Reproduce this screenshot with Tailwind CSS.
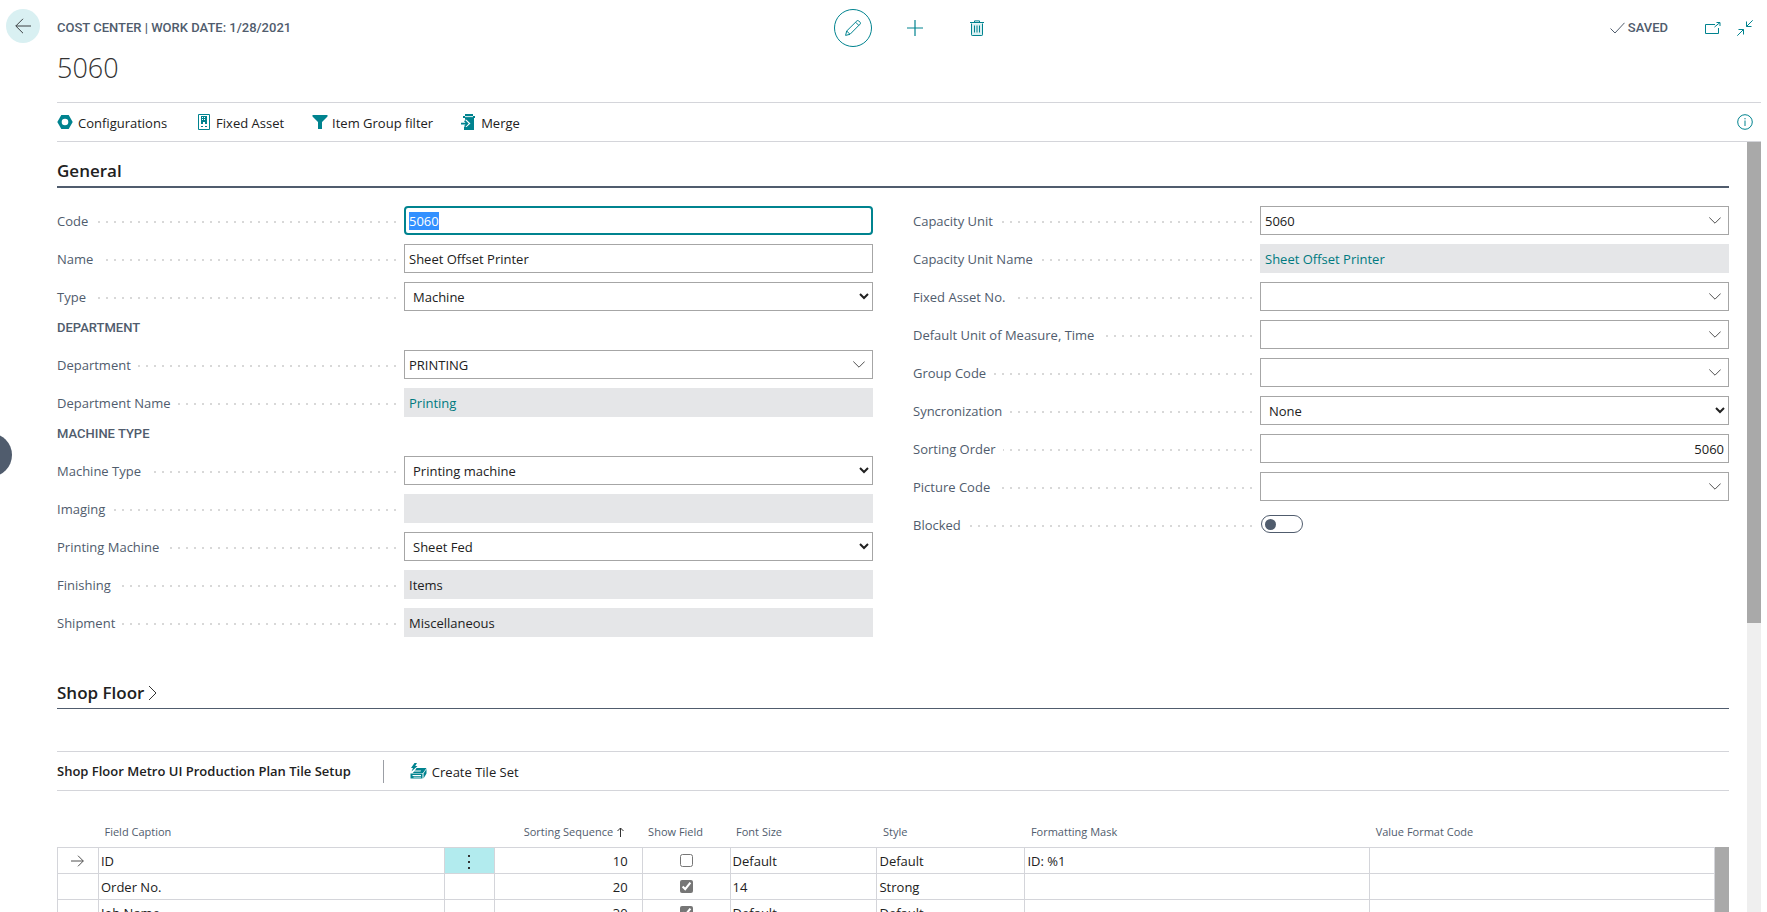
<!DOCTYPE html>
<html lang="en">
<head>
<meta charset="utf-8">
<meta name="viewport" content="width=device-width, initial-scale=1">
<title>Cost Center - 5060</title>
<script src="https://cdn.jsdelivr.net/npm/@tailwindcss/browser@4"></script>
</head>
<body class="relative flex h-screen flex-col overflow-hidden bg-white pr-1.5 font-['Open_Sans','Noto_Sans',sans-serif] text-[13px] leading-5 text-[#212121]">

<button aria-label="Open navigation" class="absolute -left-8 top-[433px] size-11 rounded-full bg-[#505c6d]"></button>

<header class="flex shrink-0">
  <div class="w-[57px] shrink-0 pl-1.5 pt-[9px]">
    <button aria-label="Back" class="flex size-[34px] items-center justify-center rounded-full bg-[#d9f0f2]">
      <svg class="size-4" viewBox="0 0 16 16" fill="none" stroke="#3c4043" stroke-width="1"><path d="M16 8H.8M8 .8.8 8 8 15.2"/></svg>
    </button>
  </div>
  <div class="flex-1 border-b border-[#d4d5da] pr-2 pt-[9px]">
    <div class="grid h-[38px] grid-cols-[minmax(0,777fr)_auto_minmax(0,757fr)] items-center">
      <p class="font-[Roboto,sans-serif] text-[13px] font-medium text-[#505c6d]">COST CENTER | WORK DATE: 1/28/2021</p>
      <div class="flex gap-6 text-[#00838f]">
        <button aria-label="Edit" class="flex size-[38px] items-center justify-center rounded-full border border-[#00838f]">
          <svg class="size-4" viewBox="0 0 16 16" fill="none" stroke="currentColor" stroke-width="1"><path d="M.6 15.400 1.700 11 11.900.9a1.300 1.300 0 0 1 1.800 0l1.400 1.400a1.300 1.300 0 0 1 0 1.800L5 14.300.6 15.400ZM1.700 11 5 14.300M10.600 2.200l3.200 3.200"/></svg>
        </button>
        <button aria-label="New" class="flex size-[38px] items-center justify-center">
          <svg class="size-4" viewBox="0 0 16 16" fill="none" stroke="currentColor" stroke-width="1.200"><path d="M8 0v16M0 8h16"/></svg>
        </button>
        <button aria-label="Delete" class="flex size-[38px] items-center justify-center">
          <svg class="size-4" viewBox="0 0 16 16" fill="none" stroke="currentColor" stroke-width="1"><path d="M2.500 3.500v11.300q0 .7.7.7h9.600q.7 0 .7-.7V3.500" fill="#d9f0f2"/><path d="M1 2.500h14M5.500 2.500v-1.600h5v1.600M5.500 5.500v7M8 5.500v7M10.500 5.500v7"/></svg>
        </button>
      </div>
      <div class="flex items-center justify-end">
        <svg class="mr-[3px] h-3 w-[15px]" viewBox="0 0 15 12" fill="none" stroke="#505c6d" stroke-width="1"><path d="M.5 6.500 5 11 14.500.8"/></svg>
        <span class="mr-[37px] font-[Roboto,sans-serif] text-[13px] font-medium text-[#505c6d]">SAVED</span>
        <button aria-label="Open in new window" class="mr-4 text-[#00838f]">
          <svg class="size-4" viewBox="0 0 16 16" fill="none" stroke="currentColor"><path d="M10 4.500H.5v9h13V8M9.500 7 15 2.500M11.500 2.500h3.500V6"/></svg>
        </button>
        <button aria-label="Collapse" class="text-[#00838f]">
          <svg class="size-4" viewBox="0 0 16 16" fill="none" stroke="currentColor"><path d="M15.700.3 9.500 6.500M9.500 1.500v5h5M.3 15.700 6.500 9.500M1.500 9.500h5v5"/></svg>
        </button>
      </div>
    </div>
    <h1 class="mt-[3px] mb-4 text-[27px] font-light leading-9 text-[#333]">5060</h1>
  </div>
</header>

<nav class="ml-[57px] flex h-[39px] shrink-0 items-center border-b border-[#d4d5da] pr-2" aria-label="Actions">
  <button class="mr-[31px] flex items-center gap-[5px]">
    <svg class="size-4" viewBox="0 0 16 16"><path fill="#00838f" fill-rule="evenodd" d="M4.300 1h7.400L15.700 8l-4 7H4.300L.3 8ZM8 4.700a3.300 3.300 0 1 0 0 6.600 3.300 3.300 0 0 0 0-6.600Z"/></svg>
    <span class="pt-0.5">Configurations</span>
  </button>
  <button class="mr-7 flex items-center gap-1.5">
    <svg class="h-4 w-3" viewBox="0 0 12 16"><path fill="none" stroke="#00838f" d="M.5.5h11v15H.5z"/><path fill="#00838f" fill-rule="evenodd" d="M3 2h6v8H7V8H5v2H3ZM4 3v1h1V3ZM6 3v1h1V3ZM4 5v1h1V5ZM6 5v1h1V5ZM3 12h2v1H3ZM7 12h2v1H7Z"/></svg>
    <span class="pt-0.5">Fixed Asset</span>
  </button>
  <button class="mr-7 flex items-center gap-1">
    <svg class="size-4" viewBox="0 0 16 16"><path fill="#00838f" d="M.5 1h15v1.500L10 8v7H6V8L.5 2.500Z"/></svg>
    <span class="pt-0.5">Item Group filter</span>
  </button>
  <button class="flex items-center gap-1.5">
    <svg class="h-4 w-[14px]" viewBox="0 0 14 16"><path fill="#00838f" d="M4 0h8v2h2v2h-1v12H3v-3h2.500L9.500 9.500 5.500 5.800 4 5.800V4H2V2h2Z"/><path fill="#fff" d="M4 2.200h8v.9H4z"/><path fill="none" stroke="#00838f" stroke-width="1.600" d="M0 9.600h6M3.600 6.600l3 3-3 3"/></svg>
    <span class="pt-0.5">Merge</span>
  </button>
  <button aria-label="Details" class="ml-auto text-[#00838f]">
    <svg class="size-4" viewBox="0 0 16 16" fill="none" stroke="currentColor"><circle cx="8" cy="8" r="7.300"/><path d="M8 6.500V12M8 4v1.300"/></svg>
  </button>
</nav>

<div class="flex min-h-0 flex-1">
  <main class="min-w-0 flex-1 overflow-hidden pl-[57px] pr-[18px]">
    <h2 class="border-b-2 border-[#505c6d] pb-[3px] pt-[17px] text-[17px] font-semibold leading-6">General</h2>

    <div class="grid grid-cols-2 gap-x-10 pt-[18px]">
      <div id="left-fields"></div>
      <div id="right-fields"></div>
    </div>

    <h2 class="mt-[35px] border-b border-[#505c6d] pb-[3px] text-[17px] leading-6">
      <button class="flex items-center gap-1 font-semibold">Shop Floor
        <svg class="h-4 w-[9px]" viewBox="0 0 9 16" fill="none" stroke="#333"><path d="M1 1l7 7-7 7"/></svg>
      </button>
    </h2>

    <section class="mt-[42px]">
      <div class="flex h-10 items-center border-y border-[#d4d5da]">
        <h3 class="mr-8 font-semibold">Shop Floor Metro UI Production Plan Tile Setup</h3>
        <span class="mr-[26px] h-[23px] w-px bg-[#9b9ea5]"></span>
        <button class="flex items-center gap-[5px]">
          <svg class="h-4 w-[17px]" viewBox="0 0 17 16"><path fill="#00838f" d="M4.500 0H7L5.200 3H7.500L1.500 8.500 3 5H1ZM6.500 5H16.500L13 10H2.800L5 7.500ZM16.500 6V10.500L13.500 15.500V10.500ZM.5 10.500H12.500V15.500H.5Z"/><path fill="#fff" d="M4 8.500h6.500l.5-.9H5ZM2.500 12h8.500v.9H2.500ZM3.500 13.800h7.500v.7H3.500Z"/></svg>
          <span class="pt-0.5">Create Tile Set</span>
        </button>
      </div>
      <div class="mt-[26px] flex">
        <table class="min-w-0 flex-1 table-fixed border-collapse">
          <colgroup><col class="w-[41px]"><col class="w-[346px]"><col class="w-[50px]"><col class="w-[148px]"><col class="w-[88px]"><col class="w-[147px]"><col class="w-[148px]"><col class="w-[345px]"><col class="w-[345px]"></colgroup>
          <thead>
            <tr class="h-[30px] text-left align-top text-[11px] leading-[30px] text-[#505c6d]">
              <th></th>
              <th class="pl-1.5 font-normal">Field Caption</th>
              <th></th>
              <th class="pr-[18px] text-right font-normal"><span class="inline-flex items-center gap-1">Sorting Sequence <svg class="h-2.5 w-[7px]" viewBox="0 0 7 10" fill="none" stroke="#333"><path d="M3.500 10V1M.5 4l3-3 3 3"/></svg></span></th>
              <th class="pl-1.5 font-normal">Show Field</th>
              <th class="pl-1.5 font-normal">Font Size</th>
              <th class="pl-1.5 font-normal">Style</th>
              <th class="pl-1.5 font-normal">Formatting Mask</th>
              <th class="pl-1.5 font-normal">Value Format Code</th>
            </tr>
          </thead>
          <tbody id="tile-rows"></tbody>
        </table>
        <div class="mt-[30px] w-[14px] bg-[#a9a9a9]"></div>
      </div>
    </section>
  </main>
  <div class="w-[14px] shrink-0 bg-[#efefef]"><div class="h-[481px] bg-[#a9a9a9]"></div></div>
</div>

<script>
const chevron = '<svg class="pointer-events-none absolute right-2 top-[11px] h-[7px] w-3" viewBox="0 0 12 7" fill="none" stroke="#505050"><path d="M.3.5 6 6.200 11.700.5"/></svg>';
const box = 'block h-[29px] w-full border border-[#a6a6a6] bg-white px-1 outline-none';
const controls = {
  text: (id, v) => `<input id="${id}" value="${v}" class="${box} selection:bg-[#3390ff] selection:text-white focus:rounded-[4px] focus:border-2 focus:border-[#00838f] focus:px-[3px]">`,
  number: (id, v) => `<input id="${id}" value="${v}" inputmode="numeric" class="${box} text-right">`,
  lookup: (id, v) => `<input id="${id}" value="${v}" role="combobox" aria-expanded="false" class="${box}">${chevron}`,
  select: (id, v) => `<select id="${id}" class="${box}"><option>${v}</option></select>`,
  readonly: (id, v) => `<input id="${id}" value="${v}" readonly class="block h-[29px] w-full bg-[#e5e6e8] px-[5px]">`,
  link: (id, v) => `<div class="h-[29px] bg-[#e5e6e8] px-[5px] leading-[30px]"><a id="${id}" href="#" class="text-[#007a80]">${v}</a></div>`,
  toggle: (id) => `<input id="${id}" type="checkbox" role="switch" class="ml-px mt-[5px] block h-[18px] w-[42px] appearance-none rounded-full border border-[#505c6d] bg-white p-[3px] before:block before:size-[11px] before:rounded-full before:bg-[#505c6d] before:content-['']">`
};
const left = [
  ['Code', 'text', '5060'], ['Name', 'text', 'Sheet Offset Printer'], ['Type', 'select', 'Machine'],
  ['DEPARTMENT'],
  ['Department', 'lookup', 'PRINTING'], ['Department Name', 'link', 'Printing'],
  ['MACHINE TYPE'],
  ['Machine Type', 'select', 'Printing machine'], ['Imaging', 'readonly', ''], ['Printing Machine', 'select', 'Sheet Fed'],
  ['Finishing', 'readonly', 'Items'], ['Shipment', 'readonly', 'Miscellaneous']
];
const right = [
  ['Capacity Unit', 'lookup', '5060'], ['Capacity Unit Name', 'link', 'Sheet Offset Printer'], ['Fixed Asset No.', 'lookup', ''],
  ['Default Unit of Measure, Time', 'lookup', ''], ['Group Code', 'lookup', ''], ['Syncronization', 'select', 'None'],
  ['Sorting Order', 'number', '5060'], ['Picture Code', 'lookup', ''], ['Blocked', 'toggle']
];
const field = ([label, kind, value]) => {
  if (!kind) return `<h3 class="h-[30px] font-[Roboto,sans-serif] text-[13px] font-medium leading-4 text-[#505c6d]">${label}</h3>`;
  const id = label.toLowerCase().replace(/[^a-z]+/g, '-');
  return `<div class="mb-[9px] grid h-[29px] grid-cols-[minmax(0,347px)_minmax(0,1fr)]">
    <div class="mr-2 flex items-center bg-[linear-gradient(to_left,#d8d8d8_2px,transparent_2px)] bg-[length:8px_2px] bg-[position:right_15px] bg-repeat-x text-[#505c6d]">
      <label for="${id}" class="whitespace-nowrap bg-white pr-[7px]">${label}</label>
    </div>
    <div class="relative">${controls[kind](id, value)}</div>
  </div>`;
};
document.getElementById('left-fields').innerHTML = left.map(field).join('');
document.getElementById('right-fields').innerHTML = right.map(field).join('');

const rows = [['ID', 10, false, 'Default', 'Default', 'ID: %1'], ['Order No.', 20, true, '14', 'Strong', ''], ['Job Name', 30, true, 'Default', 'Default', '']];
const cell = 'border border-[#d4d5da]';
const arrow = '<svg class="mx-auto h-3 w-[13px]" viewBox="0 0 13 12" fill="none" stroke="#505050"><path d="M0 6h12.300M7 .7 12.300 6 7 11.300"/></svg>';
const more = '<button aria-label="More options" class="block h-[25px] w-full"><svg class="mx-auto h-4 w-1" viewBox="0 0 4 16" fill="#333"><path d="M1 2h2v2H1zM1 8h2v2H1zM1 14h2v2H1z"/></svg></button>';
document.getElementById('tile-rows').innerHTML = rows.map((r, i) => `<tr class="h-[26px]">
  <td class="${cell}">${i === 0 ? arrow : ''}</td>
  <td class="${cell} pl-0.5">${r[0]}</td>
  <td class="${cell} ${i === 0 ? 'bg-[#b2ebee]' : ''}">${i === 0 ? more : ''}</td>
  <td class="${cell} pr-3.5 text-right">${r[1]}</td>
  <td class="${cell}"><input type="checkbox" aria-label="Show ${r[0]}" class="mx-auto block size-[13px] accent-[#767676]" ${r[2] ? 'checked' : ''}></td>
  <td class="${cell} pl-0.5">${r[3]}</td>
  <td class="${cell} pl-0.5">${r[4]}</td>
  <td class="${cell} pl-0.5">${r[5]}</td>
  <td class="${cell}"></td>
</tr>`).join('');

const code = document.getElementById('code');
code.focus();
code.select();
</script>
</body>
</html>
